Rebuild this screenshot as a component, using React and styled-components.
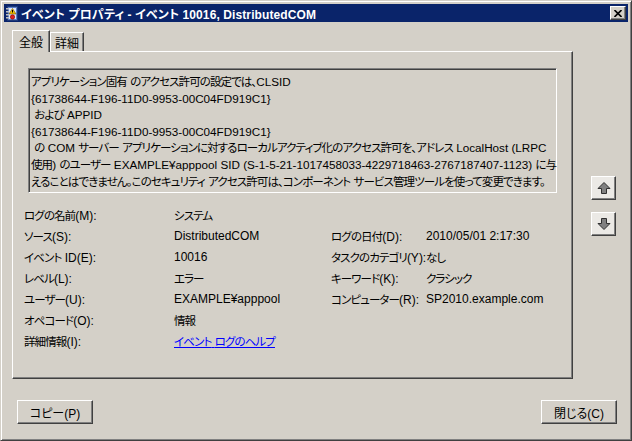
import React from "react";
import styled, { createGlobalStyle } from "styled-components";

const GlobalStyle = createGlobalStyle`
  html, body { margin: 0; padding: 0; background: #d4d0c8; }
  * { box-sizing: border-box; }
`;

const Window = styled.div`
  width: 632px;
  height: 441px;
  background: #d4d0c8;
  border: 1px solid;
  border-color: #d4d0c8 #404040 #404040 #d4d0c8;
  box-shadow: inset 1px 1px #ffffff, inset -1px -1px #808080;
  padding: 3px;
  display: flex;
  flex-direction: column;
  font-family: "Liberation Sans", "Noto Sans CJK JP", sans-serif;
  font-size: 11px;
  font-feature-settings: "palt" 1;
  color: #000;
`;

const TitleBar = styled.div`
  height: 18px;
  background: #0a246a;
  display: flex;
  align-items: center;
  padding: 0 2px;
`;

const TitleText = styled.div`
  flex: 1;
  color: #fff;
  font-weight: bold;
  font-size: 12px;
  margin-left: 2px;
  white-space: pre;
  letter-spacing: 0.1px;
`;

const CloseButton = styled.div`
  width: 16px;
  height: 14px;
  background: #d4d0c8;
  border: 1px solid;
  border-color: #ffffff #404040 #404040 #ffffff;
  box-shadow: inset -1px -1px #808080;
  display: flex;
  align-items: center;
  justify-content: center;
`;

const Content = styled.div`
  padding: 8px 0 0 8px;
  display: flex;
`;

const LeftCol = styled.div`
  display: flex;
  flex-direction: column;
`;

const TabStrip = styled.div`
  display: flex;
  align-items: flex-end;
  height: 21px;
  position: relative;
  z-index: 1;
`;

const Tab = styled.div`
  height: ${(p) => (p.$active ? "22px" : "19px")};
  padding: 0 ${(p) => (p.$active ? "6px" : "4px")};
  margin-bottom: ${(p) => (p.$active ? "-1px" : "0")};
  background: #d4d0c8;
  border: 1px solid;
  border-bottom: none;
  border-color: #ffffff #404040 transparent #ffffff;
  box-shadow: inset -1px 0 #808080;
  display: flex;
  align-items: center;
  font-size: 12px;
  padding-top: ${(p) => (p.$active ? "0" : "1px")};
`;

const Panel = styled.div`
  width: 561px;
  height: 328px;
  border: 1px solid;
  border-color: #ffffff #404040 #404040 #ffffff;
  box-shadow: inset -1px -1px #808080;
  padding: 16px 0 0 11px;
  display: flex;
  flex-direction: column;
`;

const Description = styled.div`
  width: 529px;
  height: 125px;
  margin-left: 4px;
  border: 1px solid;
  border-color: #808080 #ffffff #ffffff #808080;
  box-shadow: inset 1px 1px #404040;
  padding: 5px 2px 0 2px;
  font-size: 11.7px;
`;

const DescLine = styled.div`
  height: 16.6px;
  line-height: 16.6px;
  white-space: pre;
`;

const Jp = styled.span`
  font-size: 11.5px;
  letter-spacing: -0.9px;
`;

const Fields = styled.div`
  margin-top: 11px;
  display: grid;
  grid-template-columns: 150px 157px 95px auto;
  grid-auto-rows: 21px;
  align-items: center;
  font-size: 12px;
  white-space: pre;
`;

const Link = styled.span`
  color: #0000ff;
  text-decoration: underline;
`;

const SideCol = styled.div`
  margin-left: 18px;
  padding-top: 146px;
  display: flex;
  flex-direction: column;
  gap: 12px;
`;

const ArrowButton = styled.div`
  width: 25px;
  height: 24px;
  background: #ebe9e5;
  border: 1px solid;
  border-color: #ffffff #404040 #404040 #ffffff;
  box-shadow: inset -1px -1px #808080;
  display: flex;
  align-items: center;
  justify-content: center;
`;

const ButtonRow = styled.div`
  margin-top: 21px;
  padding: 0 11px 0 13px;
  display: flex;
  justify-content: space-between;
`;

const Button = styled.div`
  width: 76px;
  height: 24px;
  background: #d4d0c8;
  border: 1px solid;
  border-color: #ffffff #404040 #404040 #ffffff;
  box-shadow: inset -1px -1px #808080;
  display: flex;
  align-items: center;
  justify-content: center;
  font-size: 12px;
`;

const CJK = /([\u3000-\u30ff\u4e00-\u9fff\uff00-\uffef]+)/;

const Mixed = ({ text }) =>
  text
    .split(CJK)
    .filter((s) => s !== "")
    .map((s, i) => (CJK.test(s) ? <Jp key={i}>{s}</Jp> : <React.Fragment key={i}>{s}</React.Fragment>));

const TitleIcon = () => (
  <svg width="13" height="15" viewBox="0 0 13 15">
    <rect x="1.5" y="0.5" width="10" height="14" fill="#5b7fc8" stroke="#1e3a7a" />
    <rect x="3" y="2" width="7" height="11" fill="#dfe8f8" />
    {[2, 5, 8, 11].map((y) => (
      <rect key={y} x="0" y={y} width="3" height="1.5" fill="#c0c0c0" />
    ))}
    <polygon points="6.5,2.5 10,8 3,8" fill="#f5c400" stroke="#6b5300" strokeWidth="0.6" />
    <rect x="6" y="4" width="1" height="2.5" fill="#000" />
    <circle cx="6.5" cy="11" r="2.2" fill="#e02020" stroke="#7a0000" strokeWidth="0.6" />
  </svg>
);

const CloseIcon = () => (
  <svg width="8" height="7" viewBox="0 0 8 7">
    <path d="M0.5 0 L7.5 7 M7.5 0 L0.5 7" stroke="#000" strokeWidth="1.6" />
  </svg>
);

const UpArrow = () => (
  <svg width="14" height="14" viewBox="0 0 14 14">
    <polygon points="7,1.5 13,7.5 9.5,7.5 9.5,12.5 4.5,12.5 4.5,7.5 1,7.5" fill="#808080" stroke="#303030" strokeWidth="1" />
  </svg>
);

const DownArrow = () => (
  <svg width="14" height="14" viewBox="0 0 14 14">
    <polygon points="7,12.5 13,6.5 9.5,6.5 9.5,1.5 4.5,1.5 4.5,6.5 1,6.5" fill="#808080" stroke="#303030" strokeWidth="1" />
  </svg>
);

const lines = [
  "アプリケーション固有 のアクセス許可の設定では、CLSID",
  "{61738644-F196-11D0-9953-00C04FD919C1}",
  " および APPID",
  "{61738644-F196-11D0-9953-00C04FD919C1}",
  " の COM サーバー アプリケーションに対するローカルアクティブ化のアクセス許可を、アドレス LocalHost (LRPC",
  "使用) のユーザー EXAMPLE¥apppool SID (S-1-5-21-1017458033-4229718463-2767187407-1123) に与",
  "えることはできません。このセキュリティ アクセス許可は、コンポーネント サービス管理ツールを使って変更できます。",
];

const rows = [
  ["ログの名前(M):", "システム", "", ""],
  ["ソース(S):", "DistributedCOM", "ログの日付(D):", "2010/05/01 2:17:30"],
  ["イベント ID(E):", "10016", "タスクのカテゴリ(Y):", "なし"],
  ["レベル(L):", "エラー", "キーワード(K):", "クラシック"],
  ["ユーザー(U):", "EXAMPLE¥apppool", "コンピューター(R):", "SP2010.example.com"],
  ["オペコード(O):", "情報", "", ""],
  ["詳細情報(I):", null, "", ""],
];

export default function App() {
  return (
    <>
      <GlobalStyle />
      <Window>
        <TitleBar>
          <TitleIcon />
          <TitleText>イベント プロパティ - イベント 10016, DistributedCOM</TitleText>
          <CloseButton>
            <CloseIcon />
          </CloseButton>
        </TitleBar>
        <Content>
          <LeftCol>
            <TabStrip>
              <Tab $active>全般</Tab>
              <Tab>詳細</Tab>
            </TabStrip>
            <Panel>
              <Description>
                {lines.map((l, i) => (
                  <DescLine key={i}>
                    <Mixed text={l} />
                  </DescLine>
                ))}
              </Description>
              <Fields>
                {rows.map((r, i) => (
                  <React.Fragment key={i}>
                    <span><Mixed text={r[0]} /></span>
                    <span>
                      {r[1] === null ? (
                        <Link><Mixed text="イベント ログのヘルプ" /></Link>
                      ) : (
                        <Mixed text={r[1]} />
                      )}
                    </span>
                    <span><Mixed text={r[2]} /></span>
                    <span><Mixed text={r[3]} /></span>
                  </React.Fragment>
                ))}
              </Fields>
            </Panel>
          </LeftCol>
          <SideCol>
            <ArrowButton>
              <UpArrow />
            </ArrowButton>
            <ArrowButton>
              <DownArrow />
            </ArrowButton>
          </SideCol>
        </Content>
        <ButtonRow>
          <Button>コピー(P)</Button>
          <Button>閉じる(C)</Button>
        </ButtonRow>
      </Window>
    </>
  );
}
